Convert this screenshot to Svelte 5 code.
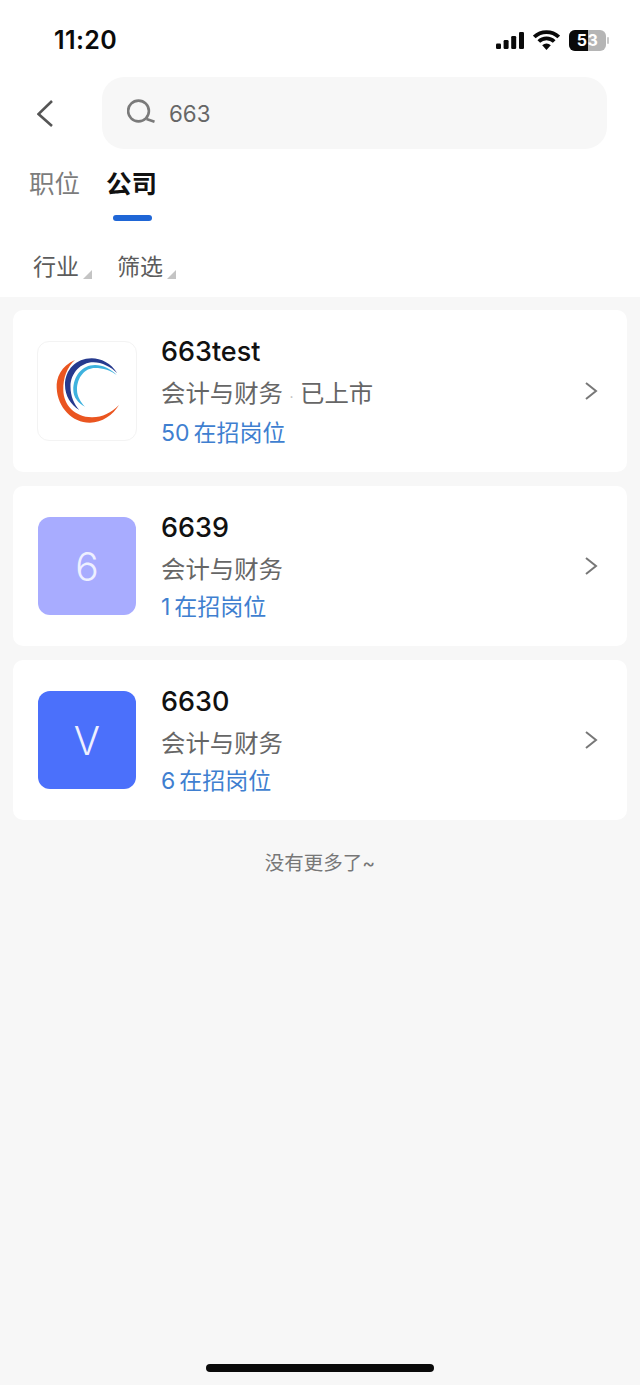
<script>
  const companies = [
    { name: '663test', industry: '会计与财务', listed: '已上市', jobs: '50 在招岗位', logo: 'arc', height: 162 },
    { name: '6639', industry: '会计与财务', jobs: '1 在招岗位', logo: 'letter', letter: '6', color: '#a8acff', height: 160 },
    { name: '6630', industry: '会计与财务', jobs: '6 在招岗位', logo: 'letter', letter: 'V', color: '#4b70fb', height: 160 }
  ];
</script>

<div class="page">
  <header class="top">
    <div class="status">
      <span class="time">11:20</span>
      <div class="status-icons">
        <svg width="28" height="17" viewBox="0 0 28 17" aria-hidden="true">
          <rect x="0" y="11.500" width="5" height="5.500" rx="1.300" />
          <rect x="7.600" y="8" width="5" height="9" rx="1.300" />
          <rect x="15.200" y="4" width="5" height="13" rx="1.300" />
          <rect x="23" y="0" width="5" height="17" rx="1.300" />
        </svg>
        <svg class="wifi" width="27" height="20" viewBox="0 0 27 20" aria-hidden="true">
          <path d="M1.300 7a17.500 17.500 0 0 1 24.400 0" />
          <path d="M5.800 11.500a11 11 0 0 1 15.400 0" />
          <path class="dot" d="M13.500 20l-4.300-4.700a6.100 6.100 0 0 1 8.600 0z" />
        </svg>
        <div class="battery">
          <div class="level"></div>
          <span class="pct">53</span>
          <i class="cap"></i>
        </div>
      </div>
    </div>

    <div class="search-row">
      <svg class="back" width="18" height="30" viewBox="0 0 18 30" aria-hidden="true">
        <path d="M15 3 1.500 16 15 28" />
      </svg>
      <div class="search">
        <svg class="glass" width="32" height="32" viewBox="0 0 32 32" aria-hidden="true">
          <circle cx="11.500" cy="14" r="10.400" />
          <path d="M19.500 22l8 2.800" />
        </svg>
        <span>663</span>
      </div>
    </div>

    <nav class="tabs">
      <span class="tab">职位</span>
      <span class="tab active">公司</span>
    </nav>

    <div class="filters">
      <span class="filter">行业<i></i></span>
      <span class="filter">筛选<i></i></span>
    </div>
  </header>

  <main class="list">
    {#each companies as c}
      <article class="card" style="height:{c.height}px">
        {#if c.logo === 'arc'}
          <div class="logo plain">
            <svg width="72" height="72" viewBox="0 0 72 72" aria-hidden="true">
              <path class="orange" d="M24 5C10 11 5 23 5.700 33 6.500 53 22 68 39 67.700 51 67.500 62 60 68 50 60 58 51 62.500 40.700 62.300 24 62 12.500 50 12.300 35 12 23 16 12 24 5Z" />
              <path class="navy" d="M66.300 18.300C60 8 50 3.300 40.700 3.300 25 3.300 14 15 14 30 14 41 20 50 28.300 55 23 49 19.500 41 19.500 31.700 19.500 18 30 7.300 42.300 7.300 51 7.300 60 12 66.300 18.300Z" />
              <path class="sky" d="M65.700 20C60 14 52 10 44 10 31 10 22.300 21 22.300 35 22.300 42 27 48 34 51.700 29.500 47 26 41 26 35 26 22 34 13 44 13 52 13 60 15.500 65.700 20Z" />
            </svg>
          </div>
        {:else}
          <div class="logo letter" style="background:{c.color}">{c.letter}</div>
        {/if}
        <div class="info">
          <h2>{c.name}</h2>
          <p class="meta" class:tagged={c.listed}>{c.industry}{#if c.listed}<b>·</b>{c.listed}{/if}</p>
          <p class="jobs">{c.jobs}</p>
        </div>
        <svg class="chevron" width="14" height="22" viewBox="0 0 14 22" aria-hidden="true">
          <path d="M2 3 12 11 2 19" />
        </svg>
      </article>
    {/each}
    <p class="end">没有更多了~</p>
  </main>

  <div class="home"></div>
</div>

<style>
  :global(body) {
    margin: 0;
    background: #f7f7f7;
  }

  .page {
    position: relative;
    width: 640px;
    height: 1385px;
    overflow: hidden;
    background: #f7f7f7;
    font-family: Inter, "Noto Sans CJK SC", sans-serif;
    color: #111;
  }

  .top {
    height: 297px;
    box-sizing: border-box;
    background: #fff;
  }

  .status {
    display: flex;
    justify-content: space-between;
    align-items: center;
    height: 40px;
    padding: 20px 34px 0 54px;
    box-sizing: content-box;
  }

  .time {
    font-size: 25px;
    font-weight: 600;
    letter-spacing: 0.4px;
    color: #0b0b0b;
  }

  .status-icons {
    display: flex;
    align-items: center;
    gap: 9px;
  }

  .status-icons svg rect {
    fill: #0a0a0a;
  }

  .wifi path {
    fill: none;
    stroke: #0a0a0a;
    stroke-width: 3.800;
  }

  .wifi .dot {
    fill: #0a0a0a;
    stroke: none;
  }

  .battery {
    position: relative;
    width: 37px;
    height: 21px;
    border-radius: 6px;
    background: #b5b5b5;
  }

  .level {
    width: 19px;
    height: 21px;
    background: #0a0a0a;
    border-radius: 6px 0 0 6px;
  }

  .pct {
    position: absolute;
    inset: 0;
    text-align: center;
    font-size: 16px;
    line-height: 21px;
    font-weight: 700;
    color: #fff;
    letter-spacing: 0.5px;
  }

  .cap {
    position: absolute;
    right: -3px;
    top: 7px;
    width: 2px;
    height: 7px;
    border-radius: 1px;
    background: #c9c9c9;
  }

  .search-row {
    display: flex;
    align-items: center;
    gap: 47px;
    margin-top: 17px;
    padding: 0 33px 0 37px;
  }

  .back path {
    fill: none;
    stroke: #555;
    stroke-width: 2.600;
  }

  .search {
    flex: 1;
    display: flex;
    align-items: center;
    gap: 10px;
    height: 72px;
    padding-left: 25px;
    border-radius: 22px;
    background: #f7f7f7;
    font-size: 22.300px;
    color: #666;
  }

  .glass {
    fill: none;
    stroke: #7a7a7a;
    stroke-width: 2.600;
  }

  .tabs {
    display: flex;
    gap: 26px;
    margin-top: 16px;
    padding-left: 29px;
    font-size: 25.500px;
    line-height: 38px;
    color: #7c7c7c;
  }

  .tab.active {
    position: relative;
    color: #111;
    font-weight: 700;
  }

  .tab.active::after {
    content: "";
    position: absolute;
    left: 7px;
    bottom: -18px;
    width: 39px;
    height: 6px;
    border-radius: 3px;
    background: #1f66d6;
  }

  .filters {
    display: flex;
    gap: 25px;
    margin-top: 47px;
    padding-left: 33px;
    font-size: 23px;
    line-height: 34px;
    color: #5c5c5c;
  }

  .filter {
    position: relative;
    padding-right: 13px;
  }

  .filter i {
    position: absolute;
    right: 0;
    bottom: 5px;
    width: 0;
    height: 0;
    border-left: 9px solid transparent;
    border-bottom: 9px solid #c4c4c4;
  }

  .list {
    display: flex;
    flex-direction: column;
    gap: 14px;
    padding: 13px 13px 0;
  }

  .card {
    display: flex;
    align-items: center;
    box-sizing: border-box;
    padding: 0 29px 0 25px;
    border-radius: 10px;
    background: #fff;
  }

  .logo {
    flex: none;
    display: flex;
    align-items: center;
    justify-content: center;
    width: 98px;
    height: 98px;
    border-radius: 12px;
  }

  .logo.plain {
    box-sizing: border-box;
    width: 100px;
    height: 100px;
    margin-left: -1px;
    margin-right: -1px;
    border: 1px solid #f3f3f3;
  }

  .logo.letter {
    color: #eef0ff;
    font-size: 39px;
    font-weight: 300;
  }

  .orange { fill: #ea5520; }
  .navy { fill: #263a8e; }
  .sky { fill: #3eb2de; }

  .info {
    flex: 1;
    margin-left: 25px;
    padding-top: 3px;
  }

  h2 {
    margin: 0;
    font-size: 27px;
    line-height: 36px;
    font-weight: 500;
    color: #111;
  }

  .meta {
    margin: 5px 0 0;
    font-size: 24.400px;
    line-height: 36px;
    color: #666;
  }

  .meta.tagged {
    padding-bottom: 2px;
  }

  /* keeps the small separator from stretching the line box */
  .meta b {
    margin: 0 6.500px;
    font-weight: 400;
    font-size: 14px;
    line-height: 1;
    color: #bbb;
  }

  .jobs {
    margin: 2px 0 0;
    font-size: 23px;
    line-height: 36px;
    word-spacing: -2.500px;
    color: #3f7fd0;
  }

  .chevron path {
    fill: none;
    stroke: #777;
    stroke-width: 2;
  }

  .end {
    margin: 14px 0 0;
    text-align: center;
    font-size: 19.500px;
    line-height: 30px;
    color: #777;
  }

  .home {
    position: absolute;
    left: 206px;
    top: 1364px;
    width: 228px;
    height: 8px;
    border-radius: 4px;
    background: #0a0a0a;
  }
</style>
